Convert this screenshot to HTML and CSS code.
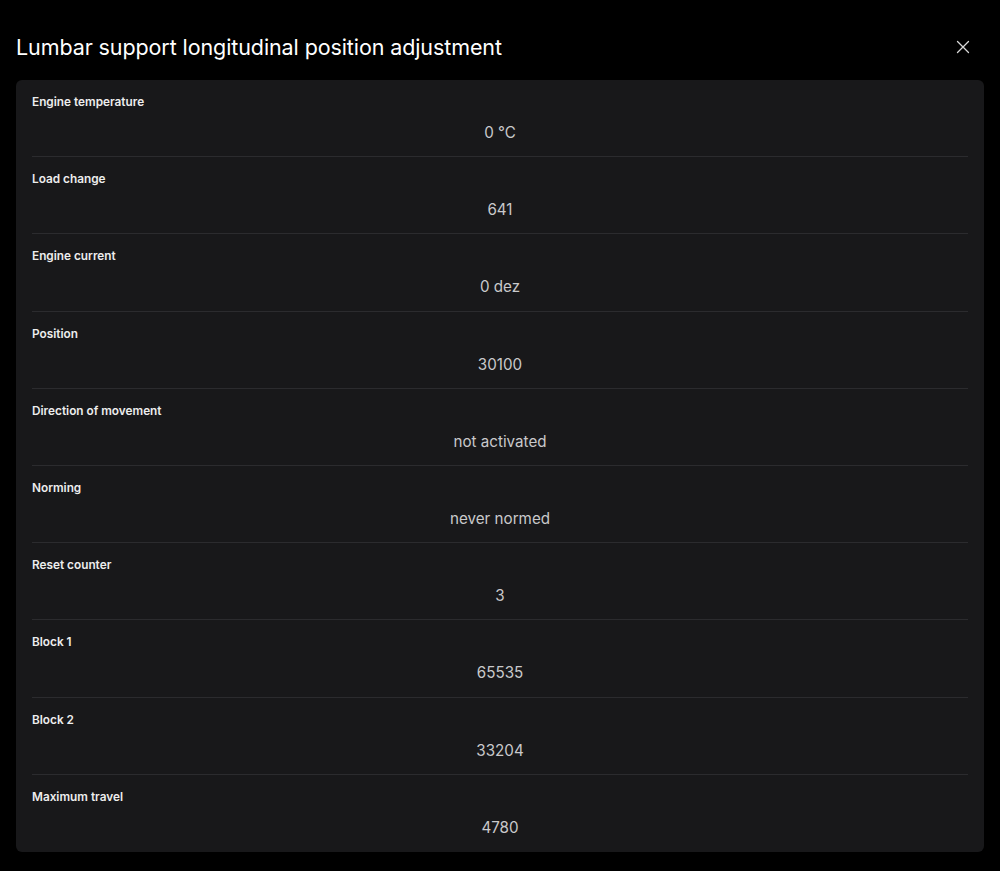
FILE: index.html
```html
<!DOCTYPE html>
<html>
<head>
<link rel="stylesheet" href="styles.css">
</head>
<body>
<div class="dialog">
    <div class="header">
        <h1 class="title">Lumbar support longitudinal position adjustment</h1>
        <div class="close">
            <svg width="14" height="14" viewBox="0 0 14 14">
                <path d="M1.5 1.5L12.5 12.5M12.5 1.5L1.5 12.5" stroke="#d8d8d8" stroke-width="1.3" stroke-linecap="round"/>
            </svg>
        </div>
    </div>
    <div class="card">
        <div class="row">
            <div class="label">Engine temperature</div>
            <div class="value">0 °C</div>
        </div>
        <div class="row">
            <div class="label">Load change</div>
            <div class="value">641</div>
        </div>
        <div class="row">
            <div class="label">Engine current</div>
            <div class="value">0 dez</div>
        </div>
        <div class="row">
            <div class="label">Position</div>
            <div class="value">30100</div>
        </div>
        <div class="row">
            <div class="label">Direction of movement</div>
            <div class="value">not activated</div>
        </div>
        <div class="row">
            <div class="label">Norming</div>
            <div class="value">never normed</div>
        </div>
        <div class="row">
            <div class="label">Reset counter</div>
            <div class="value">3</div>
        </div>
        <div class="row">
            <div class="label">Block 1</div>
            <div class="value">65535</div>
        </div>
        <div class="row">
            <div class="label">Block 2</div>
            <div class="value">33204</div>
        </div>
        <div class="row">
            <div class="label">Maximum travel</div>
            <div class="value">4780</div>
        </div>
    </div>
</div>
</body>
</html>
```

FILE: styles.css
```css
html, body{
    margin: 0;
    background: #000;
}
body{
    font-family: Inter, "Noto Sans", sans-serif;
    color: #fff;
}
.dialog{
    padding: 0 16px 19px 16px;
}
.header{
    display: flex;
    align-items: center;
    justify-content: space-between;
    height: 66px;
    padding-top: 14px;
}
.title{
    margin: 0;
    font-size: 21.5px;
    font-weight: 400;
    letter-spacing: -0.1px;
    color: #fff;
}
.close{
    width: 14px;
    height: 14px;
    margin-right: 14px;
    display: flex;
}
.card{
    background: #18181a;
    border-radius: 6px;
    padding: 0 16px;
}
.row{
    padding: 14px 0 11.2px 0;
    border-bottom: 1px solid #2b2b2e;
}
.row:last-child{
    border-bottom: none;
    padding-bottom: 12.2px;
}
.label{
    font-size: 11.8px;
    font-weight: 600;
    line-height: 16px;
    color: #ededed;
}
.value{
    margin-top: 11px;
    font-size: 15.2px;
    line-height: 24px;
    text-align: center;
    color: #c9c9cb;
}
```
